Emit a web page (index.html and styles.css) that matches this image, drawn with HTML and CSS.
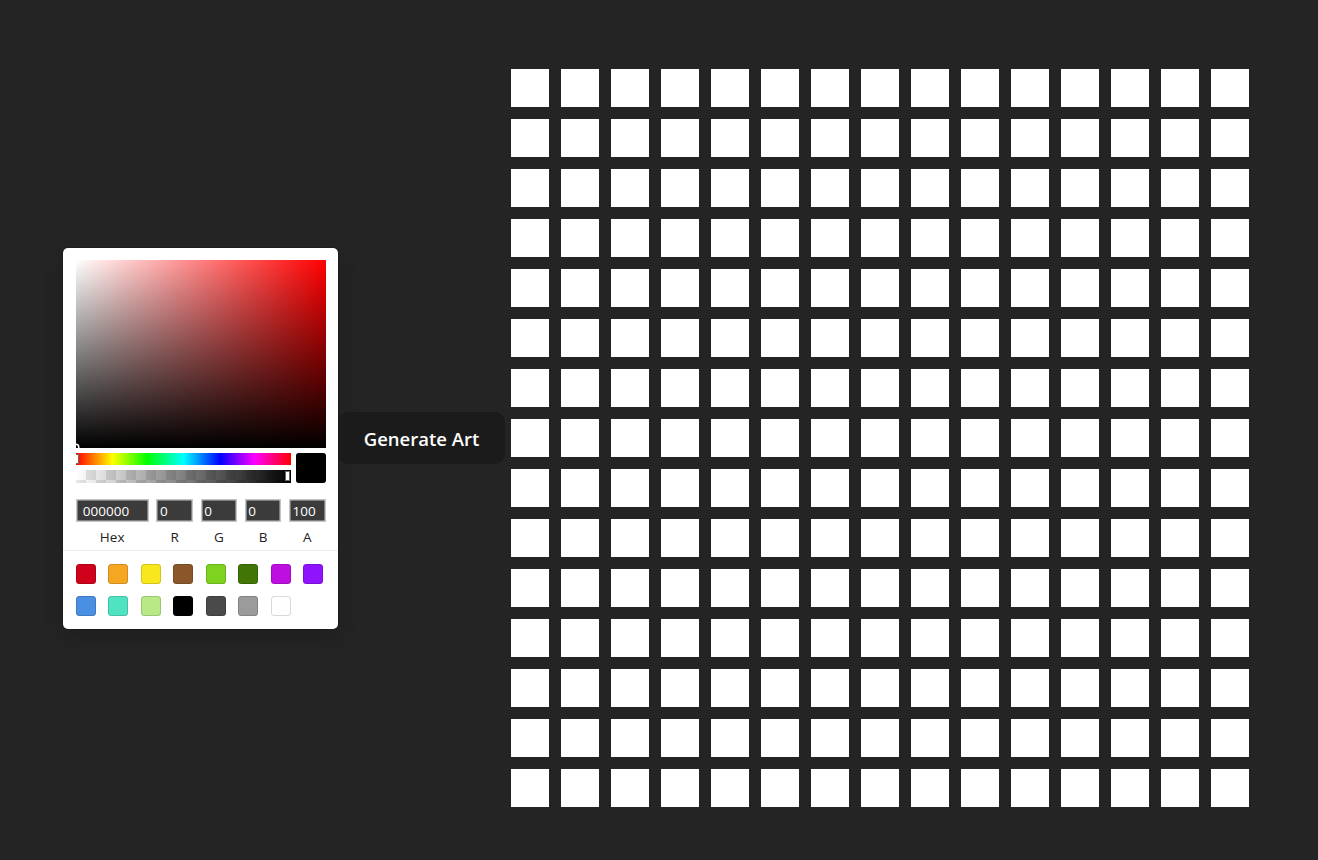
FILE: index.html
```html
<!DOCTYPE html>
<html lang="en">
<head>
<meta charset="utf-8">
<title>Pixel Art</title>
<link rel="stylesheet" href="styles.css">
</head>
<body>
<main class="app">
  <div class="picker">
    <div class="saturation">
      <div class="sat-white"></div>
      <div class="sat-black"></div>
      <div class="sat-pointer"></div>
    </div>
    <div class="controls">
      <div class="sliders">
        <div class="hue"><div class="slider-pointer hue-pointer"></div></div>
        <div class="alpha">
          <div class="alpha-grad"></div>
          <div class="slider-pointer alpha-pointer"></div>
        </div>
      </div>
      <div class="current"></div>
    </div>
    <div class="fields">
      <label class="field field-hex"><input class="field-input" value="000000"><span class="field-label">Hex</span></label>
      <label class="field"><input class="field-input" value="0"><span class="field-label">R</span></label>
      <label class="field"><input class="field-input" value="0"><span class="field-label">G</span></label>
      <label class="field"><input class="field-input" value="0"><span class="field-label">B</span></label>
      <label class="field"><input class="field-input" value="100"><span class="field-label">A</span></label>
    </div>
    <div class="presets">
      <div class="swatch sw-red"></div>
      <div class="swatch sw-orange"></div>
      <div class="swatch sw-yellow"></div>
      <div class="swatch sw-brown"></div>
      <div class="swatch sw-lime"></div>
      <div class="swatch sw-green"></div>
      <div class="swatch sw-magenta"></div>
      <div class="swatch sw-purple"></div>
      <div class="swatch sw-blue"></div>
      <div class="swatch sw-teal"></div>
      <div class="swatch sw-mint"></div>
      <div class="swatch sw-black"></div>
      <div class="swatch sw-dgray"></div>
      <div class="swatch sw-gray"></div>
      <div class="swatch sw-white"></div>
    </div>
  </div>
  <button class="generate">Generate Art</button>
  <div class="canvas">
    <div class="cell"></div><div class="cell"></div><div class="cell"></div><div class="cell"></div><div class="cell"></div><div class="cell"></div><div class="cell"></div><div class="cell"></div><div class="cell"></div><div class="cell"></div><div class="cell"></div><div class="cell"></div><div class="cell"></div><div class="cell"></div><div class="cell"></div>
    <div class="cell"></div><div class="cell"></div><div class="cell"></div><div class="cell"></div><div class="cell"></div><div class="cell"></div><div class="cell"></div><div class="cell"></div><div class="cell"></div><div class="cell"></div><div class="cell"></div><div class="cell"></div><div class="cell"></div><div class="cell"></div><div class="cell"></div>
    <div class="cell"></div><div class="cell"></div><div class="cell"></div><div class="cell"></div><div class="cell"></div><div class="cell"></div><div class="cell"></div><div class="cell"></div><div class="cell"></div><div class="cell"></div><div class="cell"></div><div class="cell"></div><div class="cell"></div><div class="cell"></div><div class="cell"></div>
    <div class="cell"></div><div class="cell"></div><div class="cell"></div><div class="cell"></div><div class="cell"></div><div class="cell"></div><div class="cell"></div><div class="cell"></div><div class="cell"></div><div class="cell"></div><div class="cell"></div><div class="cell"></div><div class="cell"></div><div class="cell"></div><div class="cell"></div>
    <div class="cell"></div><div class="cell"></div><div class="cell"></div><div class="cell"></div><div class="cell"></div><div class="cell"></div><div class="cell"></div><div class="cell"></div><div class="cell"></div><div class="cell"></div><div class="cell"></div><div class="cell"></div><div class="cell"></div><div class="cell"></div><div class="cell"></div>
    <div class="cell"></div><div class="cell"></div><div class="cell"></div><div class="cell"></div><div class="cell"></div><div class="cell"></div><div class="cell"></div><div class="cell"></div><div class="cell"></div><div class="cell"></div><div class="cell"></div><div class="cell"></div><div class="cell"></div><div class="cell"></div><div class="cell"></div>
    <div class="cell"></div><div class="cell"></div><div class="cell"></div><div class="cell"></div><div class="cell"></div><div class="cell"></div><div class="cell"></div><div class="cell"></div><div class="cell"></div><div class="cell"></div><div class="cell"></div><div class="cell"></div><div class="cell"></div><div class="cell"></div><div class="cell"></div>
    <div class="cell"></div><div class="cell"></div><div class="cell"></div><div class="cell"></div><div class="cell"></div><div class="cell"></div><div class="cell"></div><div class="cell"></div><div class="cell"></div><div class="cell"></div><div class="cell"></div><div class="cell"></div><div class="cell"></div><div class="cell"></div><div class="cell"></div>
    <div class="cell"></div><div class="cell"></div><div class="cell"></div><div class="cell"></div><div class="cell"></div><div class="cell"></div><div class="cell"></div><div class="cell"></div><div class="cell"></div><div class="cell"></div><div class="cell"></div><div class="cell"></div><div class="cell"></div><div class="cell"></div><div class="cell"></div>
    <div class="cell"></div><div class="cell"></div><div class="cell"></div><div class="cell"></div><div class="cell"></div><div class="cell"></div><div class="cell"></div><div class="cell"></div><div class="cell"></div><div class="cell"></div><div class="cell"></div><div class="cell"></div><div class="cell"></div><div class="cell"></div><div class="cell"></div>
    <div class="cell"></div><div class="cell"></div><div class="cell"></div><div class="cell"></div><div class="cell"></div><div class="cell"></div><div class="cell"></div><div class="cell"></div><div class="cell"></div><div class="cell"></div><div class="cell"></div><div class="cell"></div><div class="cell"></div><div class="cell"></div><div class="cell"></div>
    <div class="cell"></div><div class="cell"></div><div class="cell"></div><div class="cell"></div><div class="cell"></div><div class="cell"></div><div class="cell"></div><div class="cell"></div><div class="cell"></div><div class="cell"></div><div class="cell"></div><div class="cell"></div><div class="cell"></div><div class="cell"></div><div class="cell"></div>
    <div class="cell"></div><div class="cell"></div><div class="cell"></div><div class="cell"></div><div class="cell"></div><div class="cell"></div><div class="cell"></div><div class="cell"></div><div class="cell"></div><div class="cell"></div><div class="cell"></div><div class="cell"></div><div class="cell"></div><div class="cell"></div><div class="cell"></div>
    <div class="cell"></div><div class="cell"></div><div class="cell"></div><div class="cell"></div><div class="cell"></div><div class="cell"></div><div class="cell"></div><div class="cell"></div><div class="cell"></div><div class="cell"></div><div class="cell"></div><div class="cell"></div><div class="cell"></div><div class="cell"></div><div class="cell"></div>
    <div class="cell"></div><div class="cell"></div><div class="cell"></div><div class="cell"></div><div class="cell"></div><div class="cell"></div><div class="cell"></div><div class="cell"></div><div class="cell"></div><div class="cell"></div><div class="cell"></div><div class="cell"></div><div class="cell"></div><div class="cell"></div><div class="cell"></div>
  </div>
</main>
</body>
</html>
```

FILE: styles.css
```css
* { box-sizing: border-box; }

html, body {
  margin: 0;
  height: 100%;
}

body {
  background: #242424;
  font-family: "Open Sans", "Noto Sans", "Liberation Sans", sans-serif;
}

.app {
  height: 860px;
  padding-top: 16px;
  display: flex;
  align-items: center;
  justify-content: center;
}

/* ---------- picker ---------- */
.picker {
  width: 275px;
  flex: none;
  background: #fff;
  border-radius: 5px;
  padding: 12.5px 12.5px 0;
  box-shadow: rgba(0, 0, 0, .15) 0 0 0 1px, rgba(0, 0, 0, .15) 0 10px 20px;
}

.saturation {
  position: relative;
  width: 250px;
  height: 187.5px;
  background: #f00;
  overflow: hidden;
}

.sat-white,
.sat-black {
  position: absolute;
  inset: 0;
}

.sat-white { background: linear-gradient(to right, #fff, rgba(255, 255, 255, 0)); }
.sat-black { background: linear-gradient(to top, #000, rgba(0, 0, 0, 0)); }

.sat-pointer {
  position: absolute;
  left: -2.5px;
  bottom: -2.5px;
  width: 5px;
  height: 5px;
  border-radius: 50%;
  box-shadow: 0 0 0 1.5px #fff, inset 0 0 1px 1px rgba(0, 0, 0, .3), 0 0 1px 2px rgba(0, 0, 0, .4);
}

.controls {
  display: flex;
  gap: 5px;
}

.sliders {
  flex: 1;
  padding: 5px 0;
  display: flex;
  flex-direction: column;
  gap: 5px;
}

.hue,
.alpha {
  position: relative;
  height: 12.5px;
  overflow: hidden;
}

.hue {
  background: linear-gradient(to right, #f00 0%, #ff0 17%, #0f0 33%, #0ff 50%, #00f 67%, #f0f 83%, #f00 100%);
}

.alpha {
  background-color: #fff;
  background-image:
    linear-gradient(45deg, #e6e6e6 25%, transparent 25%, transparent 75%, #e6e6e6 75%),
    linear-gradient(45deg, #e6e6e6 25%, transparent 25%, transparent 75%, #e6e6e6 75%);
  background-size: 20px 20px;
  background-position: 0 0, 10px 10px;
}

.alpha-grad {
  position: absolute;
  inset: 0;
  background: linear-gradient(to right, rgba(0, 0, 0, 0), #000);
}

.slider-pointer {
  position: absolute;
  top: 1.25px;
  width: 5px;
  height: 10px;
  border-radius: 1px;
  background: #fff;
  box-shadow: inset 0 0 0 1px rgba(0, 0, 0, .6);
}

.hue-pointer { left: -2px; }
.alpha-pointer { right: 1px; }

.current {
  width: 30px;
  height: 30px;
  margin-top: 5px;
  border-radius: 3px;
  background: #000;
  box-shadow: inset 0 0 0 1px rgba(0, 0, 0, .15), inset 0 0 4px rgba(0, 0, 0, .25);
}

.fields {
  display: flex;
  padding-top: 11.5px;
}

.field {
  flex: 1;
  padding-left: 7.5px;
  display: flex;
  flex-direction: column;
}

.field-hex {
  flex: 2;
  padding-left: 0;
}

.field-input {
  display: block;
  width: 100%;
  height: 23px;
  margin: 0;
  border: none;
  padding: 1px 10% 0;
  background: #3b3b3b;
  color: #fff;
  box-shadow: inset 0 0 0 1.5px #c4c4c4;
  font-family: "Open Sans", "Noto Sans", "Liberation Sans", sans-serif;
  font-size: 13.5px;
  outline: none;
}

.field-label {
  display: block;
  text-align: center;
  font-size: 13.5px;
  color: #222;
  padding: 7px 0 4px;
  line-height: 17px;
}

.presets {
  display: flex;
  flex-wrap: wrap;
  margin: 0 -12.5px;
  padding: 12.5px 0 0 12.5px;
  border-top: 1px solid #eee;
}

.swatch {
  width: 20px;
  height: 20px;
  margin: 0 12.5px 12.5px 0;
  border-radius: 3.5px;
  box-shadow: inset 0 0 0 1px rgba(0, 0, 0, .15);
}

.sw-red { background: #d0021b; }
.sw-orange { background: #f5a623; }
.sw-yellow { background: #f8e71c; }
.sw-brown { background: #8b572a; }
.sw-lime { background: #7ed321; }
.sw-green { background: #417505; }
.sw-magenta { background: #bd10e0; }
.sw-purple { background: #9013fe; }
.sw-blue { background: #4a90e2; }
.sw-teal { background: #50e3c2; }
.sw-mint { background: #b8e986; }
.sw-black { background: #000; }
.sw-dgray { background: #4a4a4a; }
.sw-gray { background: #9b9b9b; }
.sw-white { background: #fff; }

/* ---------- button ---------- */
.generate {
  flex: none;
  width: 167px;
  height: 52px;
  border: none;
  border-radius: 10px;
  background: #1b1b1b;
  color: #fff;
  font-family: "Open Sans", "Noto Sans", sans-serif;
  font-weight: 600;
  font-size: 18.5px;
  padding: 0;
  cursor: pointer;
}

/* ---------- canvas ---------- */
.canvas {
  flex: none;
  display: grid;
  grid-template-columns: repeat(15, 38px);
  grid-auto-rows: 38px;
  gap: 12px;
  padding: 6px;
}

.cell {
  background: #fff;
}
```
